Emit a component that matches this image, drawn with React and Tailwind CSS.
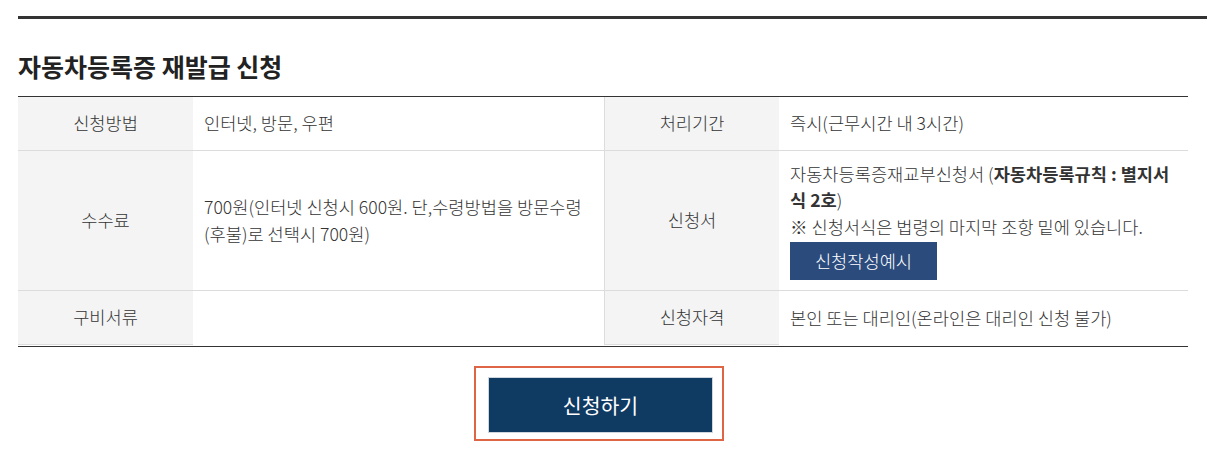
import React from "react";

const font = { fontFamily: '"Noto Sans CJK KR", "Noto Sans", sans-serif' };

const Th = ({ children, left = false }) => (
  <div
    className={`bg-[#f4f4f4] flex items-center justify-center text-[17.6px] font-light text-[#333] border-b border-[#dcdcdc] ${
      left ? "border-l" : ""
    }`}
  >
    {children}
  </div>
);

const Td = ({ children, last = false }) => (
  <div
    className={`flex items-center pl-[11px] pr-[11px] text-[17.6px] leading-[1.5] font-light text-[#333] ${
      last ? "" : "border-b border-[#dcdcdc]"
    }`}
  >
    <div>{children}</div>
  </div>
);

export default function App() {
  return (
    <div className="bg-white w-[1207px] h-[452px] pl-[18px] pt-4" style={font}>
      {/* top rule */}
      <div className="h-[3px] bg-[#333]"></div>

      <div className="mr-[19px]">
        <h2 className="mt-[31px] mb-[14px] h-[32px] leading-[32px] text-[25px] font-bold text-[#222]">
          자동차등록증 재발급 신청
        </h2>

        <div className="border-t border-b border-[#333] pb-px">
          <div className="grid grid-cols-[175px_411px_175px_409px] grid-rows-[54px_140px_54px]">
            <Th>신청방법</Th>
            <Td>인터넷, 방문, 우편</Td>
            <Th left>처리기간</Th>
            <Td>즉시(근무시간 내 3시간)</Td>

            <Th>수수료</Th>
            <Td>700원(인터넷 신청시 600원. 단,수령방법을 방문수령(후불)로 선택시 700원)</Td>
            <Th left>신청서</Th>
            <Td>
              <p>
                자동차등록증재교부신청서 (<b className="font-bold">자동차등록규칙 : 별지서<br />식 2호</b>)
              </p>
              <p>※ 신청서식은 법령의 마지막 조항 밑에 있습니다.</p>
              <button className="mt-[2px] w-[147px] h-[38px] bg-[#2b4b7d] text-white text-[17.6px] flex items-center justify-center">
                신청작성예시
              </button>
            </Td>

            <Th>구비서류</Th>
            <Td last></Td>
            <Th left>신청자격</Th>
            <Td last>본인 또는 대리인(온라인은 대리인 신청 불가)</Td>
          </div>
        </div>

        <div className="mt-[19px] flex justify-center pr-2">
          <div className="border-2 border-[#de6646] pl-3 pr-[9px] pt-[9px] pb-[6px]">
            <button className="w-[225px] h-[56px] bg-[#0f3a62] border border-[#cfd6de] text-white text-[20.5px] flex items-center justify-center">
              신청하기
            </button>
          </div>
        </div>
      </div>
    </div>
  );
}
